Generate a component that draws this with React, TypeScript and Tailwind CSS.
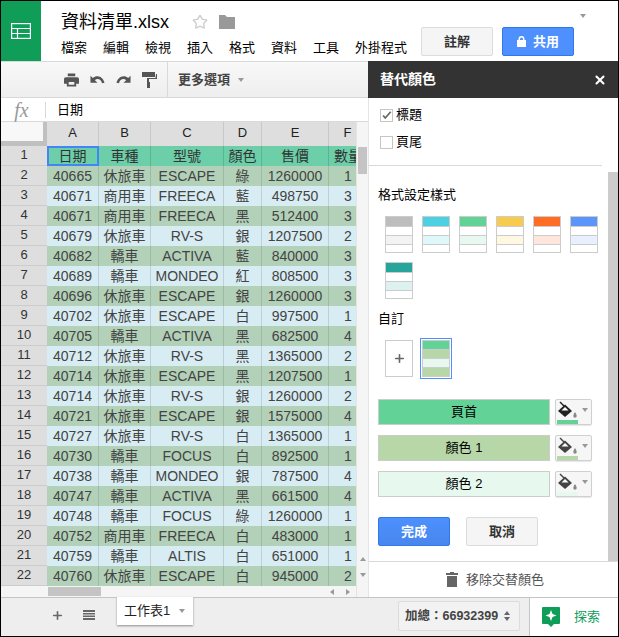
import React from 'react';
import { Star, Plus, X } from 'lucide-react';

const cjk = "font-['Liberation_Sans','Noto_Sans_CJK_TC',sans-serif]";

const rows: [string, string, string, string, string, string][] = [
  ['40665', '休旅車', 'ESCAPE', '綠', '1260000', '1'],
  ['40671', '商用車', 'FREECA', '藍', '498750', '3'],
  ['40671', '商用車', 'FREECA', '黑', '512400', '3'],
  ['40679', '休旅車', 'RV-S', '銀', '1207500', '2'],
  ['40682', '轎車', 'ACTIVA', '藍', '840000', '3'],
  ['40689', '轎車', 'MONDEO', '紅', '808500', '3'],
  ['40696', '休旅車', 'ESCAPE', '銀', '1260000', '3'],
  ['40702', '休旅車', 'ESCAPE', '白', '997500', '1'],
  ['40705', '轎車', 'ACTIVA', '黑', '682500', '4'],
  ['40712', '休旅車', 'RV-S', '黑', '1365000', '2'],
  ['40714', '休旅車', 'ESCAPE', '黑', '1207500', '1'],
  ['40714', '休旅車', 'RV-S', '銀', '1260000', '2'],
  ['40721', '休旅車', 'ESCAPE', '銀', '1575000', '4'],
  ['40727', '休旅車', 'RV-S', '白', '1365000', '1'],
  ['40730', '轎車', 'FOCUS', '白', '892500', '1'],
  ['40738', '轎車', 'MONDEO', '銀', '787500', '4'],
  ['40747', '轎車', 'ACTIVA', '黑', '661500', '4'],
  ['40748', '轎車', 'FOCUS', '綠', '1260000', '1'],
  ['40752', '商用車', 'FREECA', '白', '483000', '1'],
  ['40759', '轎車', 'ALTIS', '白', '651000', '1'],
  ['40760', '休旅車', 'ESCAPE', '白', '945000', '2'],
];

const menu = ['檔案', '編輯', '檢視', '插入', '格式', '資料', '工具', '外掛程式'];

const swatches = [
  ['bg-[#bdbdbd]', 'bg-[#f3f3f3]'],
  ['bg-[#4dd0e1]', 'bg-[#e0f7fa]'],
  ['bg-[#63d297]', 'bg-[#e7f9ef]'],
  ['bg-[#f7cb4d]', 'bg-[#fef8e3]'],
  ['bg-[#ff6d24]', 'bg-[#ffe6dd]'],
  ['bg-[#5b95f9]', 'bg-[#e8f0fe]'],
  ['bg-[#26a69a]', 'bg-[#ddf2f0]'],
];

const Caret = ({ className = '' }: { className?: string }) => (
  <span className={`inline-block shrink-0 w-0 h-0 border-x-[3.5px] border-x-transparent border-t-[4px] border-t-[#999] ${className}`} />
);

const Swatch = ({ head, alt }: { head: string; alt: string }) => (
  <div className="w-[28px] h-[37px] border border-[#ccc] flex flex-col bg-white">
    <div className={`h-[9px] ${head}`} />
    <div className="h-[9px] border-t border-[#ccc]" />
    <div className={`h-[9px] border-t border-[#ccc] ${alt}`} />
    <div className="h-[8px] border-t border-[#ccc]" />
  </div>
);

const PaintIcon = ({ bar, fill }: { bar: string; fill: string }) => (
  <div className="w-[37px] h-[26px] border border-[#d0d0d0] rounded-[2px] bg-[#f6f6f6] shadow-[0_1px_1px_rgba(0,0,0,0.1)] flex flex-col pl-[1px]">
    <div className="flex items-center h-[20px]">
      <svg width="22" height="18" viewBox="0 0 22 18" className="shrink-0">
        <path d="M3 1L7 5" stroke={fill} strokeWidth="1.500" />
        <path d="M1 10L8 3.500L15 10L8 16Z" fill={fill} />
        <path d="M4.500 9.500L8 6L11.500 9.500Z" fill="#fff" />
        <path d="M18 11C16.800 13 16.300 14 16.300 15A1.700 1.700 0 0 0 19.700 15C19.700 14 19.200 13 18 11Z" fill="#888" />
      </svg>
      <Caret className="ml-[3px]" />
    </div>
    <div className={`w-[21px] h-[4px] ${bar}`} />
  </div>
);

const ColorRow = ({ label, bg }: { label: string; bg: string }) => (
  <div className="flex items-center gap-[5px] h-[26px]">
    <div className={`w-[172px] h-[26px] border border-[#ccc] ${bg} flex items-center justify-center text-[13px] text-black`}>{label}</div>
    <PaintIcon bar={bg} fill={bg === 'bg-[#63d297]' ? '#222' : '#444'} />
  </div>
);

export default function App() {
  return (
    <div className={`w-[619px] h-[637px] border border-black bg-white flex flex-col overflow-hidden text-[#222] ${cjk}`}>
      {/* title bar */}
      <div className="h-[60px] shrink-0 flex">
        <div className="w-[40px] bg-[#0f9d58] flex items-center justify-center">
          <svg width="20" height="16" viewBox="0 0 20 16" fill="none" stroke="#fff" strokeWidth="1.2">
            <rect x="0.6" y="0.6" width="18.8" height="14.8" />
            <path d="M0.6 5.500H19.400M0.6 10.500H19.400M6.500 5.500V15.400" />
          </svg>
        </div>
        <div className="w-[380px] pl-[20px] flex flex-col">
          <div className="flex items-center h-[20px] mt-[11px]">
            <span className="text-[18px] leading-none text-black w-[131px] whitespace-nowrap">資料清單.xlsx</span>
            <Star size={16} className="text-[#ccc]" />
            <svg width="16" height="14" viewBox="0 0 16 14" fill="#999" className="ml-[11px]"><path d="M0 0h6l2 2h8v12H0z" /></svg>
          </div>
          <div className="flex gap-[16px] mt-[6px] text-[13px] leading-[20px] text-black whitespace-nowrap">
            {menu.map(m => <span key={m}>{m}</span>)}
          </div>
        </div>
        <div className="flex items-start">
          <button className="w-[72px] h-[29px] mt-[26px] border border-[#dcdcdc] rounded-[2px] bg-[#f5f5f5] text-[13px] font-bold text-[#333]">註解</button>
          <button className="w-[72px] h-[29px] mt-[26px] ml-[9px] border border-[#3079ed] rounded-[2px] bg-[#4d90fe] text-[13px] font-bold text-white flex items-center justify-center gap-[7px]">
            <svg width="9" height="11" viewBox="0 0 9 11" fill="#fff"><path d="M1.500 4V3a3 3 0 0 1 6 0v1H9v7H0V4zM3 4h3V3a1.500 1.500 0 0 0-3 0z" /></svg>
            共用
          </button>
          <Caret className="ml-[6px] mt-[13px]" />
        </div>
      </div>

      {/* body */}
      <div className="flex-1 flex min-h-0">
        <div className="w-[367px] shrink-0 flex flex-col">
          {/* toolbar */}
          <div className="h-[37px] shrink-0 bg-gradient-to-b from-[#f8f8f8] to-[#eeeeee] border-y border-[#d9d9d9] flex items-center">
            <div className="w-[167px] shrink-0 h-full flex items-center pl-[63px] gap-[11px] border-r border-[#d9d9d9]">
              <svg width="15" height="14" viewBox="0 0 16 14" fill="#555"><path d="M4 0h8v3H4zM2 4h12a2 2 0 0 1 2 2v5h-3v3H3v-3H0V6a2 2 0 0 1 2-2zm3 5v3h6V9z" /></svg>
              <svg width="15" height="10" viewBox="0 0 16 10" fill="#555"><path d="M8 1C6 1 4.300 1.700 3 2.900L0.500 0.500V8H8L5.200 5.200C6 4.500 7 4 8 4c2.300 0 4 1.500 4.800 4.500L15.500 8C14.500 4 11.500 1 8 1z" /></svg>
              <svg width="15" height="10" viewBox="0 0 16 10" fill="#555"><path d="M8 1c2 0 3.700.7 5 1.900L15.500 0.500V8H8l2.800-2.800C10 4.500 9 4 8 4 5.700 4 4 5.500 3.200 8.500L.5 8C1.500 4 4.500 1 8 1z" /></svg>
              <svg width="15" height="16" viewBox="0 0 15 16" fill="#555"><path d="M0 0h13v5H0zM14 2h1v5H7v3H5V6h8.500zM5 10h3v6H5z" /></svg>
            </div>
            <span className="ml-[10px] text-[13px] font-bold text-[#444] whitespace-nowrap">更多選項</span>
            <Caret className="ml-[8px]" />
          </div>
          {/* formula bar */}
          <div className="h-[24px] shrink-0 border-b border-[#d9d9d9] flex items-center">
            <span className="w-[45px] pr-[3px] text-center font-['Liberation_Serif',serif] italic text-[20px] text-[#999] border-r border-[#d9d9d9] leading-[16px]">fx</span>
            <span className="ml-[11px] text-[13px] text-black">日期</span>
          </div>

          {/* sheet */}
          <div className="flex-1 flex min-h-0">
            <div className="w-[355px] flex flex-col">
              <div className="h-[24px] shrink-0 grid grid-cols-[46px_52px_52px_73px_38px_67px_27px] text-center">
                <div className="bg-[#c0c0c0] pr-[4px] pb-[5px]"><div className="h-full bg-[#f8f8f8]" /></div>
                {['A', 'B', 'C', 'D', 'E', 'F'].map(c => (
                  <div key={c} className={`leading-[22px] text-[13px] bg-[#dedede] border-r text-[#222] ${c === 'F' ? 'pl-[11px] border-[#dedede]' : 'border-[#c8c8c8]'}`}>{c}</div>
                ))}
              </div>
              <div className="grid grid-cols-[46px_52px_52px_73px_38px_67px_27px] auto-rows-[20px] text-[14px] text-center leading-[20px]">
                <div className="bg-[#dedede] border-b border-[#ccc] text-[13px] leading-[17px] text-[#333]">1</div>
                {['日期', '車種', '型號', '顏色', '售價', '數量'].map((h, i) => (
                  <div key={h} className={`bg-[#6ccfa9] text-[#333] whitespace-nowrap overflow-hidden ${i === 5 ? 'pl-[5px] text-left' : 'border-r border-[#5bb592]'} ${i === 0 ? 'outline-2 -outline-offset-2 outline-[#4285f4]' : ''}`}>{h}</div>
                ))}
                {rows.map((r, i) => (
                  <React.Fragment key={i}>
                    <div className="bg-[#dedede] border-b border-[#ccc] text-[13px] leading-[17px] text-[#333]">{i + 2}</div>
                    {r.map((c, j) => (
                      <div key={j} className={`whitespace-nowrap overflow-hidden text-[#444] ${j === 5 ? 'pl-[11px]' : 'border-r'} ${i % 2 === 0 ? 'bg-[#b2d1b8] border-[#9dbaa2]' : 'bg-[#d8ecf3] border-[#bcd0d6]'}`}>{c}</div>
                    ))}
                  </React.Fragment>
                ))}
              </div>
              <div className="h-[11px] bg-[#f5f5f5] flex pl-[47px] items-center">
                <div className="w-[53px] h-[9px] bg-[#c4c4c4]" />
                <div className="ml-[229px] flex items-center gap-[12px]">
                  <span className="w-0 h-0 border-y-[3.5px] border-y-transparent border-r-[4px] border-r-[#999]" />
                  <span className="w-0 h-0 border-y-[3.5px] border-y-transparent border-l-[4px] border-l-[#999]" />
                </div>
              </div>
            </div>
            <div className="w-[12px] bg-[#f5f5f5] border-l border-[#e4e4e4] flex flex-col items-center">
              <div className="w-[9px] h-[27px] mt-[25px] bg-[#c4c4c4]" />
              <div className="flex-1" />
              <span className="w-0 h-0 border-x-[3.5px] border-x-transparent border-b-[4px] border-b-[#999]" />
              <span className="w-0 h-0 mt-[12px] mb-[20px] border-x-[3.5px] border-x-transparent border-t-[4px] border-t-[#999]" />
            </div>
          </div>
        </div>

        {/* side panel */}
        <div className="flex-1 flex flex-col min-w-0">
          <div className="h-[37px] shrink-0 bg-[#333] flex items-center justify-between pl-[12px] pr-[11px] text-white">
            <span className="text-[14px] font-bold">替代顏色</span>
            <X size={14} strokeWidth={3.5} />
          </div>
          <div className="flex-1 flex flex-col min-h-0 border-l border-[#e4e4e4]">
            <div className="h-[68px] shrink-0 mr-[16px] border-b border-[#d9d9d9] pl-[11px] pt-[10px] flex flex-col gap-[13px] text-[13px] text-black">
              <label className="flex items-center gap-[3px] h-[14px]">
                <span className="w-[13px] h-[13px] border border-[#c6c6c6] flex items-center justify-center">
                  <svg width="13" height="11" viewBox="0 0 13 11" fill="none" stroke="#666" strokeWidth="2"><path d="M2.500 5.500L5 8.500L11.500 1" /></svg>
                </span>
                標題
              </label>
              <label className="flex items-center gap-[3px] h-[14px]">
                <span className="w-[13px] h-[13px] border border-[#c6c6c6]" />
                頁尾
              </label>
            </div>
            <div className="flex-1 flex min-h-0">
              <div className="w-[239px] pl-[9px] flex flex-col text-[13px] text-black">
                <div className="mt-[20px] leading-[18px]">格式設定樣式</div>
                <div className="mt-[12px] pl-[7px] flex flex-wrap gap-x-[9px] gap-y-[9px]">
                  {swatches.map(s => <Swatch key={s[0]} head={s[0]} alt={s[1]} />)}
                </div>
                <div className="mt-[11px] leading-[18px]">自訂</div>
                <div className="mt-[10px] pl-[7px] flex items-center gap-[7px]">
                  <div className="w-[28px] h-[37px] border border-[#ccc] flex items-center justify-center">
                    <Plus size={13} strokeWidth={3} className="text-[#666]" />
                  </div>
                  <div className="w-[32px] h-[41px] border border-[#4d90fe] p-[1px]">
                    <div className="h-full border border-[#ccc] flex flex-col">
                      <div className="flex-1 bg-[#63d297]" />
                      <div className="flex-1 bg-[#b7d7a8] border-t border-[#ccc]" />
                      <div className="flex-1 bg-[#e7f9ef] border-t border-[#ccc]" />
                      <div className="flex-1 bg-[#b7d7a8] border-t border-[#ccc]" />
                    </div>
                  </div>
                </div>
                <div className="mt-[20px] flex flex-col gap-[10px]">
                  <ColorRow label="頁首" bg="bg-[#63d297]" />
                  <ColorRow label="顏色 1" bg="bg-[#b7d7a8]" />
                  <ColorRow label="顏色 2" bg="bg-[#e7f9ef]" />
                </div>
                <div className="mt-[20px] flex gap-[16px]">
                  <button className="w-[72px] h-[29px] rounded-[2px] border border-[#3079ed] bg-gradient-to-b from-[#4d90fe] to-[#4787ed] text-white text-[13px] font-bold">完成</button>
                  <button className="w-[72px] h-[29px] rounded-[2px] border border-[#dcdcdc] bg-[#f5f5f5] text-[#333] text-[13px] font-bold">取消</button>
                </div>
              </div>
              <div className="flex-1 pt-[6px]">
                <div className="w-[10px] h-full bg-[#cccccc]" />
              </div>
            </div>
            <div className="h-[36px] shrink-0 border-t border-[#d9d9d9] flex items-center pl-[77px] gap-[8px] text-[13px] text-[#555]">
              <svg width="12" height="15" viewBox="0 0 12 15" fill="#666"><path d="M4 0h4v1h4v2H0V1h4zM1 4h10v11H1z" /></svg>
              移除交替顏色
            </div>
          </div>
        </div>
      </div>

      {/* sheet tabs */}
      <div className="h-[39px] shrink-0 bg-[#eeeeee] border-t border-[#c4c4c4] flex">
        <div className="w-[116px] shrink-0 flex items-start pl-[50px] pt-[11px] gap-[19px]">
          <Plus size={13} strokeWidth={3} className="text-[#666]" />
          <svg width="12" height="12" viewBox="0 0 12 12" fill="#666"><path d="M0 1h12v2H0zM0 4h12v1.500H0zM0 6.500h12V8H0zM0 9h12v2H0z" /></svg>
        </div>
        <div className="w-[76px] shrink-0 h-[28px] -mt-px bg-white shadow-[0_1px_2px_rgba(0,0,0,0.4)] flex items-center pl-[7px] gap-[9px] text-[13px] text-[#222] whitespace-nowrap">
          工作表1<Caret />
        </div>
        <div className="w-[336px] shrink-0 pl-[205px] pt-[3px]">
          <div className="w-[122px] h-[30px] border border-[#dcdcdc] rounded-[2px] bg-[#f2f2f2] flex items-center pl-[6px] text-[12.5px] font-bold text-[#444] whitespace-nowrap">
            {'加總\uFF1A66932399'}
            <span className="ml-[6px] flex flex-col gap-[2px]">
              <span className="w-0 h-0 border-x-[3.5px] border-x-transparent border-b-[4px] border-b-[#666]" />
              <span className="w-0 h-0 border-x-[3.5px] border-x-transparent border-t-[4px] border-t-[#666]" />
            </span>
          </div>
        </div>
        <div className="flex-1 bg-white border-l border-[#c4c4c4] flex items-center pl-[12px] gap-[14px] text-[13px] text-[#0f9d58] whitespace-nowrap">
          <svg width="18" height="21" viewBox="0 0 18 21" className="shrink-0"><path d="M1 0h16a1 1 0 0 1 1 1v15a1 1 0 0 1-1 1h-5l-3 3-3-3H1a1 1 0 0 1-1-1V1a1 1 0 0 1 1-1z" fill="#0f9d58" /><path d="M9 3l1.500 4 4 1.500-4 1.500L9 14l-1.500-4-4-1.500 4-1.500z" fill="#fff" /></svg>
          探索
        </div>
      </div>
    </div>
  );
}
